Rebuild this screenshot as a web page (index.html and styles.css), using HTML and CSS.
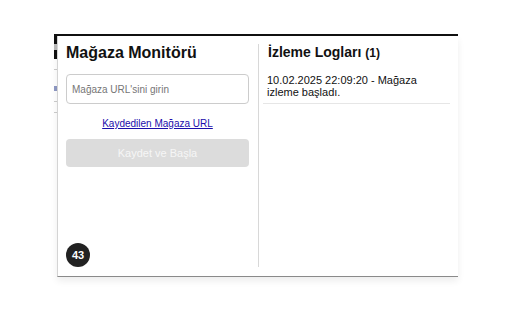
FILE: index.html
```html
<!DOCTYPE html>
<html>
  <head>
    <meta charset="UTF-8" />
    <title>Mağaza Monitörü</title>
    <link rel="stylesheet" href="styles.css">
  </head>
  <body>
    <div id="page">
      <div class="page-bar"></div>
      <div class="page-line"></div>
      <div class="page-mark"></div>
      <div class="page-line"></div>
      <div class="page-line"></div>
    </div>

    <div id="popup">
      <div id="left-col">
        <h1>Mağaza Monitörü</h1>
        <input type="text" id="store-url" placeholder="Mağaza URL'sini girin" />
        <a href="#" id="saved-url">Kaydedilen Mağaza URL</a>
        <button id="start-btn" disabled>Kaydet ve Başla</button>
        <div id="badge">43</div>
      </div>

      <div id="right-col">
        <h2>İzleme Logları <span class="count">(1)</span></h2>
        <div id="log-list">
          <div class="log-entry">10.02.2025 22:09:20 - Mağaza izleme başladı.</div>
        </div>
      </div>
    </div>
  </body>
</html>
```

FILE: styles.css
```css
* {
  box-sizing: border-box;
}

body {
  font-family: "Liberation Sans", Arial, sans-serif;
  background-color: #fff;
  margin: 0;
  padding: 34px 0 0 54px;
  color: #111;
}

/* page behind the popup */
#page {
  width: 404px;
  border-top: 2px solid #111;
}

.page-bar {
  width: 3px;
  height: 23px;
  background-color: #111;
  border-top: 8px solid #111;
  border-bottom: 9px solid #111;
  background-color: #bbb;
}

.page-line {
  width: 3px;
  height: 1px;
  background-color: #ccc;
  margin-top: 10px;
}

.page-mark {
  width: 3px;
  height: 5px;
  margin-top: 16px;
  background-color: #8f99c4;
}

#popup {
  position: absolute;
  left: 57px;
  top: 36px;
  width: 401px;
  height: 241px;
  background-color: #fff;
  border-left: 1px solid #d4d4d4;
  border-bottom: 1px solid #8a8a8a;
  box-shadow: 0 4px 7px rgba(0, 0, 0, 0.07);
  padding: 8px 0 9px 8px;
  display: grid;
  grid-template-columns: 193px 199px;
}

#left-col {
  display: flex;
  flex-direction: column;
  padding-right: 9px;
  border-right: 1px solid #d8d8d8;
}

h1 {
  font-size: 16px;
  line-height: 18px;
  margin: 0;
}

#store-url {
  margin-top: 12px;
  height: 30px;
  width: 100%;
  border: 1px solid #ccc;
  border-radius: 4px;
  padding: 0 5px;
  font-family: inherit;
  font-size: 10px;
  outline: none;
}

#store-url::placeholder {
  color: #767676;
}

#saved-url {
  margin-top: 14px;
  align-self: center;
  font-size: 10px;
  line-height: 12px;
  color: #1a0dab;
}

#start-btn {
  margin-top: 9px;
  height: 28px;
  width: 100%;
  background-color: #dcdcdc;
  color: #f6f6f6;
  border: none;
  border-radius: 4px;
  font-family: inherit;
  font-size: 11px;
}

#badge {
  margin-top: auto;
  width: 24px;
  height: 24px;
  border-radius: 50%;
  background-color: #222;
  color: #fff;
  font-size: 11px;
  font-weight: bold;
  display: flex;
  align-items: center;
  justify-content: center;
}

#right-col {
  padding: 0 8px 0 4px;
}

h2 {
  font-size: 14px;
  line-height: 16px;
  margin: 0;
  padding-left: 5px;
}

h2 .count {
  font-size: 12px;
}

#log-list {
  margin-top: 10px;
}

.log-entry {
  font-size: 11px;
  line-height: 12px;
  padding: 3px 4px 5px;
  border-bottom: 1px solid #e6e6e6;
}
```
